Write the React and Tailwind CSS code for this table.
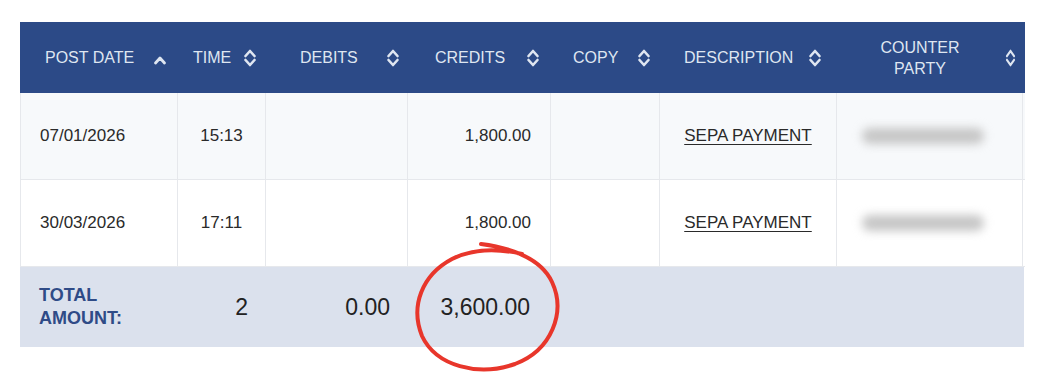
import React from 'react';

const SortBoth = ({ w = 14 }) => (
    <svg width={w} height="20" viewBox="0 0 14 20" fill="none" stroke="currentColor" strokeWidth="2.6" strokeLinecap="round" strokeLinejoin="round" preserveAspectRatio="none">
        <path d="M2.5 8 L7 3 L11.5 8" />
        <path d="M2.5 12 L7 17 L11.5 12" />
    </svg>
);

const SortUp = () => (
    <svg width="14" height="10" viewBox="0 0 14 10" fill="none" stroke="currentColor" strokeWidth="2.8" strokeLinecap="round" strokeLinejoin="round" className="mt-[5px]">
        <path d="M2.5 8 L7 3 L11.5 8" />
    </svg>
);

const cols = 'grid grid-cols-[157px_88px_142px_143px_109px_177px_186px]';

const rows = [
    { date: '07/01/2026', time: '15:13', credit: '1,800.00', bg: 'bg-[#f7f9fb]' },
    { date: '30/03/2026', time: '17:11', credit: '1,800.00', bg: 'bg-white' },
];

export default function App() {
    return (
        <div className="w-[1042px] h-[390px] bg-white overflow-hidden font-['Liberation_Sans',Arial,sans-serif]">
            <div className="relative ml-[20px] pt-[22px] w-[1005px]">
                {/* Header */}
                <div className="grid grid-cols-[157px_88px_142px_143px_109px_177px_189px] h-[71px] bg-[#2c4a87] text-[#dfe6f1] text-[16px] uppercase">
                    <div className="flex items-center pl-[25px] gap-[19px]">
                        <span>Post Date</span>
                        <SortUp />
                    </div>
                    <div className="flex items-center pl-[16px] gap-[12px]">
                        <span>Time</span>
                        <SortBoth />
                    </div>
                    <div className="flex items-center pl-[35px] gap-[28px]">
                        <span>Debits</span>
                        <SortBoth />
                    </div>
                    <div className="flex items-center pl-[28px] gap-[21px]">
                        <span>Credits</span>
                        <SortBoth />
                    </div>
                    <div className="flex items-center pl-[23px] gap-[19px]">
                        <span>Copy</span>
                        <SortBoth />
                    </div>
                    <div className="flex items-center pl-[25px] gap-[15px]">
                        <span>Description</span>
                        <SortBoth />
                    </div>
                    <div className="flex items-center pl-[24px] gap-[25px]">
                        <span className="w-[120px] text-center text-[16px] leading-[21px]">Counter<br />Party</span>
                        <SortBoth w={11} />
                    </div>
                </div>

                {/* Body rows */}
                {rows.map((r, i) => (
                    <div key={i} className={`${cols} ${r.bg} h-[87px] border-b border-l border-[#e6e8ec] text-[17px] text-[#2a2a2a]`}>
                        <div className="flex items-center pl-[19px] border-r border-[#e6e8ec]">{r.date}</div>
                        <div className="flex items-center justify-center border-r border-[#e6e8ec]">{r.time}</div>
                        <div className="border-r border-[#e6e8ec]" />
                        <div className="flex items-center justify-end pr-[19px] border-r border-[#e6e8ec]">{r.credit}</div>
                        <div className="border-r border-[#e6e8ec]" />
                        <div className="flex items-center justify-center border-r border-[#e6e8ec]">
                            <span className="underline underline-offset-[3px]">SEPA PAYMENT</span>
                        </div>
                        <div className="flex items-center justify-center border-r border-[#e6e8ec]">
                            <div className="w-[122px] h-[16px] rounded-full bg-[#c6c6c6] blur-[5px] -ml-[14px]" />
                        </div>
                    </div>
                ))}

                {/* Total row */}
                <div className="grid grid-cols-[157px_88px_142px_143px_1fr] h-[80px] w-[1004px] bg-[#dbe1ed] text-[#222]">
                    <div className="flex items-center pl-[19px] font-bold text-[18px] leading-[23px] text-[#2f4b87]">
                        TOTAL<br />AMOUNT:
                    </div>
                    <div className="flex items-center justify-end pr-[17px] text-[23px]">2</div>
                    <div className="flex items-center justify-end pr-[17px] text-[23px]">0.00</div>
                    <div className="flex items-center justify-end pr-[20px] text-[23px]">3,600.00</div>
                    <div />
                </div>

                {/* Red hand-drawn annotation */}
                <svg className="absolute left-[-20px] top-0 pointer-events-none" width="1042" height="390" viewBox="0 0 1042 390" fill="none">
                    <path
                        d="M481 244 C505 247 540 256 552 282 C566 312 552 350 515 364 C478 377 436 366 422 336 C410 306 422 275 452 259 C472 249 497 248 522 254"
                        stroke="#e8362b"
                        strokeWidth="4"
                        strokeLinecap="round"
                        strokeLinejoin="round"
                    />
                </svg>
            </div>
        </div>
    );
}
